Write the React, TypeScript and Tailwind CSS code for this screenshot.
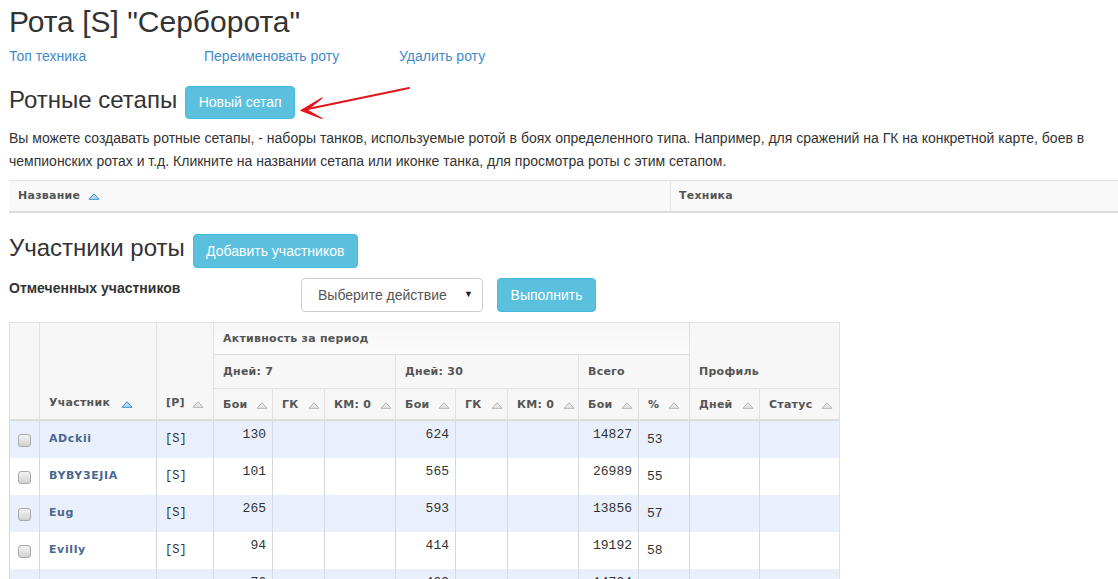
import React from "react";

function Sort({ active }: { active?: boolean }) {
  return (
    <svg width="12" height="7" viewBox="0 0 12 7" className="shrink-0">
      <path
        d="M6 0.8 L11 6.3 L1 6.3 Z"
        fill={active ? "#b9dbf3" : "#e9e9e9"}
        stroke={active ? "#3b8fd2" : "#b3b3b3"}
        strokeWidth="1"
        strokeLinejoin="round"
      />
    </svg>
  );
}

function Checkbox() {
  return (
    <div className="w-[13px] h-[13px] rounded-[3px] border border-[#a9a9a9] bg-gradient-to-b from-[#f3f3f3] to-[#d2d2d2]" />
  );
}

type Row = {
  name: string;
  b7: string;
  b30: string;
  total: string;
  pct: string;
};

const rows: Row[] = [
  { name: "ADckii", b7: "130", b30: "624", total: "14827", pct: "53" },
  { name: "BYBY3EJIA", b7: "101", b30: "565", total: "26989", pct: "55" },
  { name: "Eug", b7: "265", b30: "593", total: "13856", pct: "57" },
  { name: "Evilly", b7: "94", b30: "414", total: "19192", pct: "58" },
  { name: "Fenix", b7: "76", b30: "409", total: "14704", pct: "52" },
];

const hcell =
  "flex items-center px-[9px] border-l border-[#e1e1e1] bg-[#f7f7f7] text-[11px] font-bold text-[#555] tracking-[0.25px] whitespace-nowrap";

const mono = { fontFamily: '"Liberation Mono", monospace' };

export default function App() {
  return (
    <div
      className="relative w-[1118px] h-[579px] overflow-hidden bg-white text-[#333]"
      style={{ fontFamily: '"Liberation Sans", Arial, sans-serif' }}
    >
      <div className="pl-[9px] flex flex-col">
        <h1 className="mt-[4px] text-[30px] leading-[36px] font-normal text-[#333]">
          Рота [S] "Серборота"
        </h1>

        <div className="mt-[6px] flex text-[14px] leading-[20px] text-[#428bca]">
          <a className="w-[195px]">Топ техника</a>
          <a className="w-[195px]">Переименовать роту</a>
          <a>Удалить роту</a>
        </div>

        <div className="mt-[20px] flex items-start gap-[8px]">
          <h2 className="text-[24px] leading-[28px] font-normal">Ротные сетапы</h2>
          <button className="w-[110px] h-[33px] rounded-[4px] bg-[#5bc0de] border border-[#46b8da] text-white text-[14px]">
            Новый сетап
          </button>
        </div>

        <p className="mt-[8px] text-[14px] leading-[23px] w-[1106px]">
          Вы можете создавать ротные сетапы, - наборы танков, используемые ротой в боях определенного типа. Например, для сражений на ГК на конкретной карте, боев в чемпионских ротах и т.д. Кликните на названии сетапа или иконке танка, для просмотра роты с этим сетапом.
        </p>

        <div
          className="mt-[7px] flex h-[33px] w-[1200px] border-t border-[#e3e3e3] border-b-2 border-b-[#dcdcdc] bg-[#f9f9f9] text-[11px] font-bold text-[#555] tracking-[0.25px]"
          style={{ fontFamily: '"DejaVu Sans", Verdana, sans-serif' }}
        >
          <div className="w-[662px] flex items-center gap-[8px] pl-[9px] border-r border-[#e6e6e6]">
            <span>Название</span>
            <Sort active />
          </div>
          <div className="flex items-center pl-[8px]">Техника</div>
        </div>

        <div className="mt-[21px] flex items-start gap-[8px]">
          <h2 className="text-[24px] leading-[28px] font-normal">Участники роты</h2>
          <button className="w-[165px] h-[34px] rounded-[4px] bg-[#5bc0de] border border-[#46b8da] text-white text-[14px]">
            Добавить участников
          </button>
        </div>

        <div className="mt-[10px] flex items-start">
          <div className="w-[292px] text-[14px] leading-[20px] font-bold">Отмеченных участников</div>
          <div className="w-[182px] h-[34px] rounded-[4px] border border-[#ccc] flex items-center pl-[16px] pr-[9px] text-[14px] text-[#555]">
            <span className="flex-1">Выберите действие</span>
            <span className="text-[9px] text-[#222]">▼</span>
          </div>
          <button className="ml-[14px] w-[99px] h-[34px] rounded-[4px] bg-[#5bc0de] border border-[#46b8da] text-white text-[14px]">
            Выполнить
          </button>
        </div>

        <div
          className="mt-[10px] w-[831px] grid grid-cols-[30px_117px_57px_59px_52px_71px_60px_52px_71px_60px_51px_70px_80px] grid-rows-[32px_33px_33px_37px_37px_37px_37px_37px] border-t border-r border-[#e1e1e1]"
          style={{ fontFamily: '"DejaVu Sans", Verdana, sans-serif' }}
        >
          <div className={hcell + " col-start-1 row-start-1 row-span-3 border-b-2 border-b-[#dcdcdc]"} />
          <div className={hcell + " col-start-2 row-start-1 row-span-3 items-end pb-[8px] gap-[11px] border-b-2 border-b-[#dcdcdc]"}>
            <span>Участник</span>
            <span className="pb-[3px]"><Sort active /></span>
          </div>
          <div className={hcell + " col-start-3 row-start-1 row-span-3 items-end pb-[8px] gap-[7px] border-b-2 border-b-[#dcdcdc]"}>
            <span>[P]</span>
            <span className="pb-[3px]"><Sort /></span>
          </div>
          <div className={hcell + " col-start-4 col-span-8 row-start-1 pt-[1px] border-b border-b-[#dedede] bg-gradient-to-b from-[#f6f6f6] to-[#fcfcfc]"}>
            Активность за период
          </div>
          <div className={hcell + " col-start-12 col-span-2 row-start-1 row-span-2 items-end pb-[8px]"}>
            Профиль
          </div>
          <div className={hcell + " col-start-4 col-span-3 row-start-2 pt-[1px]"}>Дней: 7</div>
          <div className={hcell + " col-start-7 col-span-3 row-start-2 pt-[1px]"}>Дней: 30</div>
          <div className={hcell + " col-start-10 col-span-2 row-start-2 pt-[1px]"}>Всего</div>

          {["Бои", "ГК", "КМ: 0", "Бои", "ГК", "КМ: 0", "Бои", "%", "Дней", "Статус"].map((t, i) => (
            <div
              key={i}
              className={hcell + " row-start-3 gap-[9px] border-t border-t-[#e1e1e1] border-b-2 border-b-[#dcdcdc] pt-[3px]"}
            >
              <span>{t}</span>
              <Sort />
            </div>
          ))}

          {rows.map((r, i) => {
            const bg = i % 2 === 0 ? "bg-[#e9f0fb]" : "bg-white";
            const cell = "border-l border-[#d5dae2] " + bg;
            const num =
              cell +
              " flex items-center justify-end pr-[6px] pb-[9px] text-[13px] text-[#333]";
            return (
              <React.Fragment key={r.name}>
                <div className={cell + " flex items-center pl-[8px] pt-[1px]"}>
                  <Checkbox />
                </div>
                <div className={cell + " flex items-center pl-[9px] text-[11px] font-bold tracking-[0.6px] text-[#4a6790]"}>
                  {r.name}
                </div>
                <div
                  className={cell + " flex items-center pl-[8px] pb-[1px] text-[12px] text-[#333]"}
                  style={mono}
                >
                  [S]
                </div>
                <div className={num} style={mono}>
                  {r.b7}
                </div>
                <div className={cell} />
                <div className={cell} />
                <div className={num} style={mono}>
                  {r.b30}
                </div>
                <div className={cell} />
                <div className={cell} />
                <div className={num} style={mono}>
                  {r.total}
                </div>
                <div
                  className={cell + " flex items-center pl-[8px] pt-[1px] text-[13px] text-[#333]"}
                  style={mono}
                >
                  {r.pct}
                </div>
                <div className={cell} />
                <div className={cell} />
              </React.Fragment>
            );
          })}
        </div>
      </div>

      <svg
        className="absolute left-[295px] top-[80px]"
        width="125"
        height="45"
        viewBox="0 0 125 45"
      >
        <line x1="114" y1="8" x2="8" y2="30" stroke="#e3161b" strokeWidth="2" strokeLinecap="round" />
        <path d="M27 18 L6 30.5 L27 38.5 L12 30 Z" fill="#e3161b" stroke="#e3161b" strokeWidth="1.2" strokeLinejoin="round" />
      </svg>
    </div>
  );
}
